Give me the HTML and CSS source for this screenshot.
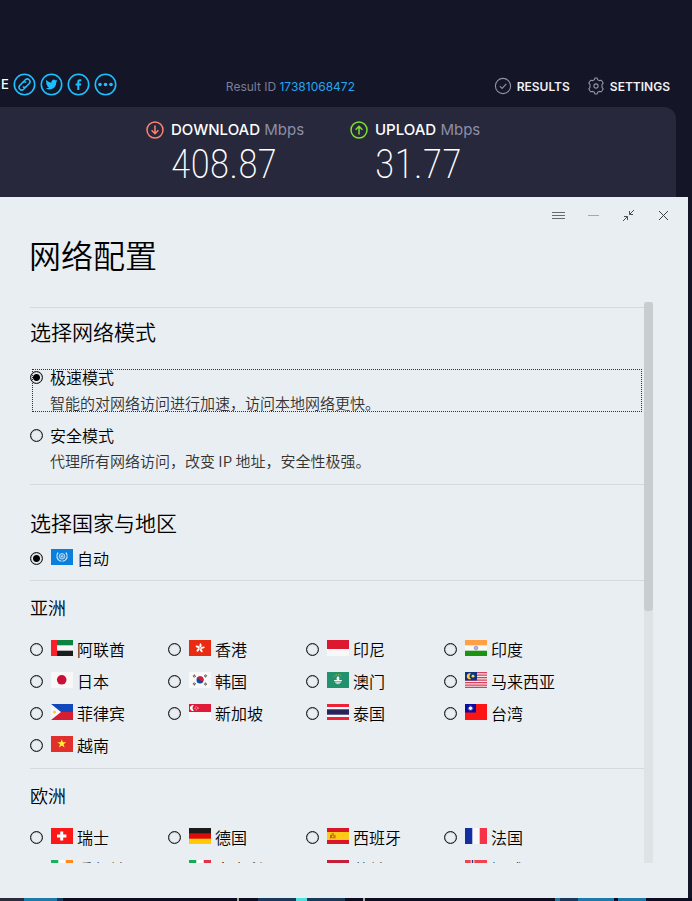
FILE: index.html
```
<!DOCTYPE html>
<html lang="zh-CN">
  <head>
    <meta charset="UTF-8" />
    <meta name="viewport" content="width=device-width, initial-scale=1.0" />
    <title>网络配置</title>
    <link rel="stylesheet" href="styles.css">
  </head>
  <body>
    <header class="topbar">
      <div class="share">
        <span class="share-label">E</span>
        <a href="#link" aria-label="Link">
          <svg width="23" height="23" viewBox="0 0 23 23" fill="none" stroke="#1cbfff" stroke-width="1.6"><circle cx="11.5" cy="11.5" r="10.2"/><g transform="rotate(-45 11.5 11.5)" stroke-width="1.5"><path d="M12 14.200H7.600a2.700 2.700 0 0 1 0-5.400h4a2.700 2.700 0 0 1 2.600 2.400"/><path d="M11 8.800h4.400a2.700 2.700 0 0 1 0 5.400h-4a2.700 2.700 0 0 1-2.600-2.400"/></g></svg>
        </a>
        <a href="#twitter" aria-label="Twitter">
          <svg width="23" height="23" viewBox="0 0 23 23"><circle cx="11.500" cy="11.500" r="10.200" fill="none" stroke="#1cbfff" stroke-width="1.600"/><path fill="#1cbfff" transform="translate(5.500 5.500) scale(.5)" d="M23.950 4.570a10 10 0 0 1-2.820.77 4.960 4.960 0 0 0 2.160-2.720c-.95.55-2 .95-3.120 1.180a4.920 4.920 0 0 0-8.380 4.480C7.690 8.090 4.070 6.130 1.640 3.160a4.820 4.820 0 0 0-.67 2.480c0 1.710.87 3.210 2.190 4.100a4.900 4.900 0 0 1-2.230-.62v.06a4.920 4.920 0 0 0 3.950 4.830 5 5 0 0 1-2.210.08 4.940 4.940 0 0 0 4.600 3.420A9.870 9.870 0 0 1 0 19.540a13.990 13.990 0 0 0 7.550 2.210c9.050 0 14-7.500 14-13.980 0-.21 0-.42-.02-.63a9.940 9.940 0 0 0 2.420-2.570z"/></svg>
        </a>
        <a href="#facebook" aria-label="Facebook">
          <svg width="23" height="23" viewBox="0 0 23 23"><circle cx="11.500" cy="11.500" r="10.200" fill="none" stroke="#1cbfff" stroke-width="1.600"/><path fill="#1cbfff" d="M10.300 17v-4.600H8.600v-1.900h1.700V9c0-1.700 1-2.700 2.600-2.700h1.400v1.900h-1c-.8 0-1 .4-1 1v1.300h2l-.3 1.900h-1.700V17z"/></svg>
        </a>
        <a href="#more" aria-label="More">
          <svg width="23" height="23" viewBox="0 0 23 23" fill="#1cbfff"><circle cx="11.500" cy="11.500" r="10.200" fill="none" stroke="#1cbfff" stroke-width="1.600"/><circle cx="6" cy="11.500" r="1.800"/><circle cx="11.500" cy="11.500" r="1.800"/><circle cx="17" cy="11.500" r="1.800"/></svg>
        </a>
      </div>
      <div class="result-id">Result ID <a href="#result">17381068472</a></div>
      <nav class="topnav">
        <a href="#results">
          <svg width="18" height="18" viewBox="0 0 18 18" fill="none" stroke="#9193a8" stroke-width="1.100"><circle cx="9" cy="9" r="7.600"/><path d="M5.800 9.200l2.300 2.200 4.200-4.500"/></svg>
          RESULTS
        </a>
        <a href="#settings">
          <svg width="18" height="18" viewBox="0 0 18 18" fill="none" stroke="#9193a8" stroke-width="1.100" stroke-linejoin="round"><path d="M7.300 2.700 8 1h2l.7 1.700 1.500.9 1.900-.4 1.200 1.300.9 1.700-1.200 1.500v2.600l1.200 1.500-.9 1.700-1.200 1.300-1.900-.4-1.500.9L10 17H8l-.7-1.700-1.500-.9-1.900.4-1.200-1.300-.9-1.700L3 10.300V7.700L1.800 6.200l.9-1.700 1.200-1.300 1.900.4z"/><circle cx="9" cy="9" r="2.100"/></svg>
          SETTINGS
        </a>
      </nav>
    </header>

    <section class="results">
      <div class="metric">
        <svg width="18" height="18" viewBox="0 0 18 18" fill="none" stroke="#ff8370" stroke-width="1.500"><circle cx="9" cy="9" r="8"/><path d="M9 4.500v8M5.600 9.300 9 12.700l3.400-3.400"/></svg>
        <div class="metric-label"><strong>DOWNLOAD</strong> Mbps</div>
        <div class="metric-value">408.87</div>
      </div>
      <div class="metric">
        <svg width="18" height="18" viewBox="0 0 18 18" fill="none" stroke="#7fe02f" stroke-width="1.500"><circle cx="9" cy="9" r="8"/><path d="M9 13.500v-8M5.600 8.700 9 5.300l3.400 3.400"/></svg>
        <div class="metric-label"><strong>UPLOAD</strong> Mbps</div>
        <div class="metric-value">31.77</div>
      </div>
    </section>

    <main class="window">
      <div class="titlebar">
        <button type="button" aria-label="菜单"><svg width="13" height="13" viewBox="0 0 13 13" stroke="#666a6d"><path d="M0 3.500h13M0 6.500h13M0 9.500h13"/></svg></button>
        <button type="button" aria-label="最小化"><svg width="13" height="13" viewBox="0 0 13 13" stroke="#a3a8ab"><path d="M1 6.500h11"/></svg></button>
        <button type="button" aria-label="还原"><svg width="13" height="13" viewBox="0 0 13 13" fill="none" stroke="#4c5053"><path d="M12 1 7.500 5.500M7.500 2v3.500H11M1 12l4.500-4.500M2 7.500h3.500V11"/></svg></button>
        <button type="button" aria-label="关闭"><svg width="13" height="13" viewBox="0 0 13 13" stroke="#3c4043"><path d="M2 2l9 9M11 2l-9 9"/></svg></button>
      </div>
      <h1>网络配置</h1>

      <div class="scroll-area">
        <form class="scroll-content">
          <section class="modes">
            <h2>选择网络模式</h2>
            <label class="mode focused">
              <input type="radio" name="mode" checked />
              <span class="mode-name">极速模式</span>
              <span class="mode-desc">智能的对网络访问进行加速，访问本地网络更快。</span>
            </label>
            <label class="mode">
              <input type="radio" name="mode" />
              <span class="mode-name">安全模式</span>
              <span class="mode-desc">代理所有网络访问，改变 IP 地址，安全性极强。</span>
            </label>
          </section>

          <section class="countries">
            <h2>选择国家与地区</h2>
            <label class="country">
              <input type="radio" name="country" checked />
              <svg class="flag" viewBox="0 0 22 16"><rect width="22" height="16" fill="#0a7fdc"/><g fill="none" stroke="#d5ebfa"><circle cx="11" cy="7.300" r="2.800" stroke-width=".8"/><path d="M11 4.500v5.600M8.200 7.300h5.600M9 5.300l4 4M13 5.300l-4 4" stroke-width=".5"/><path d="M7.200 3.500C4.800 6 5.200 11 10.500 12.300M14.800 3.500c2.400 2.500 2 7.500-3.300 8.800" stroke-width="1.100"/></g></svg>
              自动
            </label>
          </section>

          <section class="region">
            <h3>亚洲</h3>
            <div class="country-grid">
              <label class="country">
                <input type="radio" name="country" />
                <svg class="flag" viewBox="0 0 22 16"><rect width="22" height="16" fill="#f7f7f7"/><rect width="22" height="5.300" fill="#0c8440"/><rect y="10.700" width="22" height="5.300" fill="#1c1c1c"/><rect width="6" height="16" fill="#fb1f2d"/></svg>
                阿联酋
              </label>
              <label class="country">
                <input type="radio" name="country" />
                <svg class="flag" viewBox="0 0 22 16"><rect width="22" height="16" fill="#ea2b14"/><g fill="#fff"><ellipse cx="11.500" cy="5.400" rx="1" ry="2.200"/><ellipse cx="11.500" cy="5.400" rx="1" ry="2.200" transform="rotate(72 11 8)"/><ellipse cx="11.500" cy="5.400" rx="1" ry="2.200" transform="rotate(144 11 8)"/><ellipse cx="11.500" cy="5.400" rx="1" ry="2.200" transform="rotate(216 11 8)"/><ellipse cx="11.500" cy="5.400" rx="1" ry="2.200" transform="rotate(288 11 8)"/></g></svg>
                香港
              </label>
              <label class="country">
                <input type="radio" name="country" />
                <svg class="flag" viewBox="0 0 22 16"><rect width="22" height="16" fill="#f8f8f8"/><rect width="22" height="9" fill="#dc1730"/></svg>
                印尼
              </label>
              <label class="country">
                <input type="radio" name="country" />
                <svg class="flag" viewBox="0 0 22 16"><rect width="22" height="16" fill="#f8f8f8"/><rect width="22" height="5.300" fill="#ffa044"/><rect y="10.700" width="22" height="5.300" fill="#1b9312"/><circle cx="11" cy="8" r="1.800" fill="#b9b9df" stroke="#5b5bb0" stroke-width=".5"/></svg>
                印度
              </label>
              <label class="country">
                <input type="radio" name="country" />
                <svg class="flag" viewBox="0 0 22 16"><rect width="22" height="16" fill="#f8f8f8"/><circle cx="10.700" cy="7.800" r="4.800" fill="#ca1038"/></svg>
                日本
              </label>
              <label class="country">
                <input type="radio" name="country" />
                <svg class="flag" viewBox="0 0 22 16"><rect width="22" height="16" fill="#f8f8f8"/><circle cx="11" cy="8" r="3.500" fill="#0f4aa0"/><path d="M7.600 7a3.500 3.500 0 0 1 6.900 1.500C13.500 10 12 9.500 11 8S8.500 6 7.600 7z" fill="#d01d3e"/><g stroke="#555" stroke-width="2.600" stroke-dasharray="1 .4"><path d="M4.300 4.800l2.200-1.600M15.500 3.200l2.200 1.600M4.300 11.200l2.200 1.600M15.500 12.800l2.200-1.600"/></g></svg>
                韩国
              </label>
              <label class="country">
                <input type="radio" name="country" />
                <svg class="flag" viewBox="0 0 22 16"><rect width="22" height="16" fill="#21926d"/><path d="M11 4c1.600 1.200 1.800 2.600 1 4h3c-.3 2.300-1.800 3.700-4 4.200C8.800 11.700 7.300 10.300 7 8h3c-.8-1.400-.6-2.800 1-4z" fill="#f4faf6"/><path d="M7 9.500h8M8 11h6" stroke="#21926d" stroke-width=".6"/><path d="M7 4.500a5.200 5.200 0 0 1 8 0" fill="none" stroke="#d4cf3c" stroke-width="1" stroke-dasharray="1 1.200"/></svg>
                澳门
              </label>
              <label class="country">
                <input type="radio" name="country" />
                <svg class="flag" viewBox="0 0 22 16"><rect width="22" height="16" fill="#f4e8ec"/><path d="M0 .6h22M0 3.100h22M0 5.600h22M0 8.100h22M0 10.600h22M0 13.100h22M0 15.400h22" stroke="#d8415c" stroke-width="1.200"/><rect width="12" height="8.500" fill="#10357e"/><path d="M6 1.500a3 3 0 1 0 0 5.500 3.200 3.200 0 0 1 0-5.500z" fill="#ffd44a"/><circle cx="8" cy="4.200" r="1.400" fill="#ffd44a"/></svg>
                马来西亚
              </label>
              <label class="country">
                <input type="radio" name="country" />
                <svg class="flag" viewBox="0 0 22 16"><rect width="22" height="8" fill="#1149bd"/><rect y="8" width="22" height="8" fill="#d51d33"/><path d="M0 0l10 8-10 8z" fill="#f8f8f8"/><circle cx="3.500" cy="8" r="1.600" fill="#f9cd45"/></svg>
                菲律宾
              </label>
              <label class="country">
                <input type="radio" name="country" />
                <svg class="flag" viewBox="0 0 22 16"><rect width="22" height="16" fill="#f8f8f8"/><rect width="22" height="8" fill="#e01a38"/><path d="M5 1.300a3 3 0 1 0 0 5.600 3.400 3.400 0 0 1 0-5.600z" fill="#fff"/><circle cx="7.500" cy="4.200" r="1.500" fill="none" stroke="#fff" stroke-width=".9" stroke-dasharray=".9 .9"/></svg>
                新加坡
              </label>
              <label class="country">
                <input type="radio" name="country" />
                <svg class="flag" viewBox="0 0 22 16"><rect width="22" height="16" fill="#f8f8f8"/><rect width="22" height="3" fill="#f02036"/><rect y="13" width="22" height="3" fill="#f02036"/><rect y="5.300" width="22" height="5.400" fill="#28235a"/></svg>
                泰国
              </label>
              <label class="country">
                <input type="radio" name="country" />
                <svg class="flag" viewBox="0 0 22 16"><rect width="22" height="16" fill="#fd1414"/><rect width="11" height="8.500" fill="#0b0ba0"/><circle cx="5.500" cy="4.300" r="1.700" fill="#fff"/><circle cx="5.500" cy="4.300" r="2.300" fill="none" stroke="#fff" stroke-width=".5" stroke-dasharray=".6 .6"/></svg>
                台湾
              </label>
              <label class="country">
                <input type="radio" name="country" />
                <svg class="flag" viewBox="0 0 22 16"><rect width="22" height="16" fill="#e02f2c"/><path d="M10.800 3.200l1.100 3.100h3.300l-2.600 2 1 3.200-2.800-1.900L8 11.500l1-3.200-2.600-2h3.300z" fill="#fff32e"/></svg>
                越南
              </label>
            </div>
          </section>

          <section class="region">
            <h3>欧洲</h3>
            <div class="country-grid">
              <label class="country">
                <input type="radio" name="country" />
                <svg class="flag" viewBox="0 0 22 16"><rect width="22" height="16" fill="#fd1818"/><path d="M10.700 3.500v9M6 8h9.400" stroke="#fff" stroke-width="3"/></svg>
                瑞士
              </label>
              <label class="country">
                <input type="radio" name="country" />
                <svg class="flag" viewBox="0 0 22 16"><rect width="22" height="16" fill="#ffcb05"/><rect width="22" height="10.700" fill="#df0b0b"/><rect width="22" height="5.300" fill="#1b1b1b"/></svg>
                德国
              </label>
              <label class="country">
                <input type="radio" name="country" />
                <svg class="flag" viewBox="0 0 22 16"><rect width="22" height="16" fill="#d91527"/><rect y="4" width="22" height="8" fill="#ffc917"/><path d="M3.500 10.500V6.800M8 10.500V6.800M4.500 9.800V7h2.500v2.800zM4.500 5.800h2.500" fill="none" stroke="#b9581c" stroke-width=".9"/></svg>
                西班牙
              </label>
              <label class="country">
                <input type="radio" name="country" />
                <svg class="flag" viewBox="0 0 22 16"><rect width="22" height="16" fill="#f8f8f8"/><rect width="7.300" height="16" fill="#12309f"/><rect x="14.700" width="7.300" height="16" fill="#f63445"/></svg>
                法国
              </label>
              <label class="country">
                <input type="radio" name="country" />
                <svg class="flag" viewBox="0 0 22 16"><rect width="22" height="16" fill="#fff"/><rect width="7.300" height="16" fill="#16b35c"/><rect x="14.700" width="7.300" height="16" fill="#ff8a1e"/></svg>
                爱尔兰
              </label>
              <label class="country">
                <input type="radio" name="country" />
                <svg class="flag" viewBox="0 0 22 16"><rect width="22" height="16" fill="#fff"/><rect width="7.300" height="16" fill="#16a957"/><rect x="14.700" width="7.300" height="16" fill="#e23347"/></svg>
                意大利
              </label>
              <label class="country">
                <input type="radio" name="country" />
                <svg class="flag" viewBox="0 0 22 16"><rect width="22" height="16" fill="#f8f8f8"/><rect width="22" height="5.300" fill="#c2203a"/><rect y="10.700" width="22" height="5.300" fill="#1e448f"/></svg>
                荷兰
              </label>
              <label class="country">
                <input type="radio" name="country" />
                <svg class="flag" viewBox="0 0 22 16"><rect width="22" height="16" fill="#ef4350"/><path d="M7.500 0v16M0 8h22" stroke="#fff" stroke-width="3.600"/><path d="M7.500 0v16M0 8h22" stroke="#253a7d" stroke-width="1.600"/></svg>
                挪威
              </label>
            </div>
          </section>
        </form>
        <div class="scrollbar"><div class="scrollbar-thumb"></div></div>
      </div>
    </main>
    <div class="desktop-strip"></div>
  </body>
</html>
```
FILE: styles.css
```
* {
  box-sizing: border-box;
}
body {
  margin: 0;
  height: 100vh;
  display: flex;
  flex-direction: column;
  overflow: hidden;
  background-color: #141526;
  font-family: "Inter", "Noto Sans CJK SC", sans-serif;
}
a {
  color: inherit;
  text-decoration: none;
}
svg {
  display: block;
  flex: none;
}

/* speed test page behind the window */
.topbar {
  display: flex;
  align-items: center;
  height: 107px;
  padding: 65px 22px 0 1px;
}
.share {
  display: flex;
  align-items: center;
  gap: 4px;
  margin-bottom: 4px;
}
.share-label {
  color: #fff;
  font-size: 13px;
  font-weight: 500;
}
.result-id {
  margin-left: 109px;
  color: #7c7d97;
  font-size: 12px;
}
.result-id a {
  color: #26a6f0;
}
.topnav {
  display: flex;
  gap: 17px;
  margin-left: auto;
}
.topnav a {
  display: flex;
  align-items: center;
  gap: 5px;
  color: #f0f0f5;
  font-size: 12px;
  font-weight: 600;
}
.results {
  display: grid;
  grid-template-columns: 204px 204px;
  height: 90px;
  flex: none;
  margin-right: 16px;
  padding: 13px 0 0 146px;
  background-color: #27283b;
  border-top-right-radius: 12px;
}
.metric {
  display: grid;
  grid-template-columns: 18px 1fr;
  grid-template-rows: 20px 50px;
  column-gap: 7px;
  align-items: center;
}
.metric-label {
  color: #8d8ea6;
  font-size: 15px;
  line-height: 18px;
}
.metric-label strong {
  color: #fff;
  font-weight: 500;
}
.metric-value {
  grid-column: 2;
  color: #fff;
  font-family: "Liberation Sans Narrow", "Roboto Condensed", "Open Sans Condensed", "Roboto", sans-serif;
  font-size: 40px;
  font-weight: 200;
  line-height: 50px;
}

/* settings window */
.window {
  flex: 1;
  min-height: 0;
  display: flex;
  flex-direction: column;
  margin-right: 4px;
  padding-bottom: 35px;
  background-color: #e9eef2;
  color: #000;
  font-family: "Noto Sans CJK SC", sans-serif;
}
.titlebar {
  display: flex;
  justify-content: flex-end;
  padding-right: 7px;
}
.titlebar button {
  display: flex;
  align-items: center;
  justify-content: center;
  width: 35px;
  height: 36px;
  padding: 0;
  border: none;
  background: none;
}
h1,
h2,
h3 {
  margin: 0;
  font-weight: 350;
}
h1 {
  margin: 0 0 27px 29px;
  font-size: 32px;
  line-height: 42px;
}
h2 {
  font-size: 21px;
  line-height: 32px;
}
h3 {
  padding: 14px 0 15px;
  font-size: 18px;
  line-height: 24px;
}
.scroll-area {
  flex: 1;
  min-height: 0;
  display: flex;
  margin: 0 35px 0 30px;
  overflow: hidden;
}
.scroll-content {
  flex: 1;
  padding-top: 5px;
}
.scrollbar {
  width: 9px;
  background-color: #dee3e6;
}
.scrollbar-thumb {
  height: 55%;
  border-radius: 3px;
  background-color: #c8cdd0;
}
.scroll-content section {
  border-top: 1px solid #d4d9dd;
}
input[type="radio"] {
  appearance: none;
  flex: none;
  width: 13px;
  height: 13px;
  margin: 0;
  border: 1px solid #111;
  border-radius: 50%;
  box-shadow: inset 0 0 1px #000;
}
input[type="radio"]:checked {
  background: radial-gradient(circle, #000 3px, transparent 4px);
}
.modes {
  padding: 7px 0 11px;
}
.modes h2 {
  margin-bottom: 18px;
}
.mode {
  position: relative;
  display: grid;
  grid-template-columns: 13px 1fr;
  column-gap: 7px;
  row-gap: 2px;
  align-items: center;
  font-size: 16px;
  line-height: 24px;
  font-weight: 350;
}
.mode + .mode {
  margin-top: 8px;
}
.mode-desc {
  grid-column: 2;
  color: #333;
  font-size: 15px;
}
.mode.focused::after {
  content: "";
  position: absolute;
  inset: 4px 2px 3px;
  border: 1px dotted #333;
}
.countries {
  padding: 21px 0 5px;
}
.countries h2 {
  margin-bottom: 5px;
}
.country-grid {
  display: grid;
  grid-template-columns: repeat(4, 138px);
  padding-bottom: 6px;
}
.country {
  display: flex;
  align-items: center;
  height: 32px;
  padding-bottom: 2px;
  font-size: 16px;
  font-weight: 350;
}
.flag {
  width: 22px;
  height: 16px;
  margin: 0 4px 2px 8px;
}

.desktop-strip {
  height: 3px;
  flex: none;
  background: linear-gradient(90deg, #2b2d3d 24px, #1d7bac 24px 57px, #173a5a 57px 63px, #0b0c22 63px 237px, #aaa 237px 239px, #0b0c22 239px 258px, #173a5a 258px 296px, #4fe0e0 296px 307px, #173a5a 307px 345px, #0b0c22 345px 363px, #aaa 363px 365px, #0b0c22 365px 555px, #1d7bac 555px 560px, #173a5a 560px 578px, #1d7bac 578px 614px, #0b0c22 614px 618px, #1d7bac 618px 646px, #0b0c22 646px);
}
```
